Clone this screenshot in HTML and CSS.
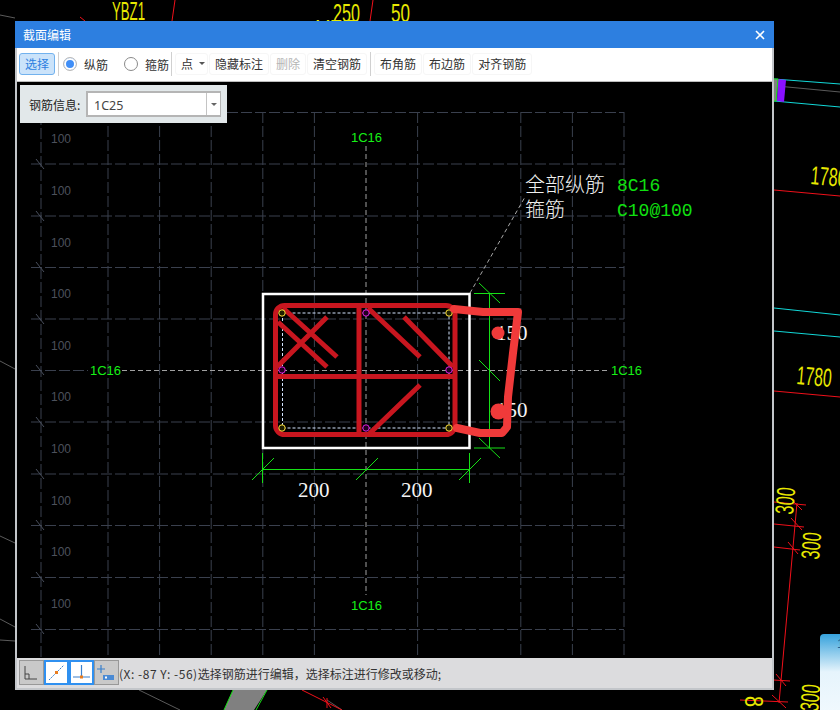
FILE: index.html
```html
<!DOCTYPE html>
<html lang="zh">
<head>
<meta charset="utf-8">
<title>截面编辑</title>
<link rel="stylesheet" href="styles.css">
</head>
<body>
<div class="desktop">
  <svg class="backdrop" width="840" height="710" viewBox="0 0 840 710">
    <path class="ln-gray" d="M0 15L15 18M0 361L15 369M0 536L15 543M0 619L15 627M0 640L15 641M139 690L180 710M327 700L342 710M777 86L840 92"/>
    <path class="ln-red" d="M175 0L172 21M373 0L370 21M80 17L85 21M302 690L342 710M774 190L840 196M774 391L840 397"/>
    <path class="ln-red" d="M797 503L779 703M774 502L806 505M774 524L804 527M774 547L800 550M774 680L790 681M740 700L788 702M790 498L802 510M791 518L802 530M788 542L798 554M776 674L786 686M772 695L786 708M323 697L331 708M327 698V708"/>
    <path class="ln-cyan" d="M774 79L840 84M774 101L840 107M774 308L840 315M774 331L840 337"/>
    <polygon class="fill-gray" points="774,79 778,79 777,101 774,101"/>
    <polygon class="fill-purple" points="778,79 786,80 784,102 777,101"/>
    <path class="ln-green" d="M774 79H778L776 101H774"/>
    <polygon class="fill-gray" points="233,690 267,690 254,710 224,710"/>
    <path class="ln-green" d="M233 690L224 710M267 690L256 710"/>
    <text class="cad-y" x="112" y="20" textLength="33" lengthAdjust="spacingAndGlyphs">YBZ1</text>
    <text class="cad-y" x="316" y="38" textLength="40" lengthAdjust="spacingAndGlyphs">YBZ</text>
    <text class="cad-y" x="333" y="22" textLength="27" lengthAdjust="spacingAndGlyphs">250</text>
    <text class="cad-y" x="391" y="22" textLength="19" lengthAdjust="spacingAndGlyphs">50</text>
    <text class="cad-y" transform="translate(810 184) rotate(5)" textLength="36" lengthAdjust="spacingAndGlyphs">1780</text>
    <text class="cad-y" transform="translate(796 384) rotate(5)" textLength="35" lengthAdjust="spacingAndGlyphs">1780</text>
    <text class="cad-y" transform="translate(793 515) rotate(-85)" textLength="27" lengthAdjust="spacingAndGlyphs">300</text>
    <text class="cad-y" transform="translate(819 560) rotate(-85)" textLength="27" lengthAdjust="spacingAndGlyphs">300</text>
    <text class="cad-y" transform="translate(818 712) rotate(-85)" textLength="27" lengthAdjust="spacingAndGlyphs">300</text>
    <text class="cad-y" transform="translate(745 696) rotate(90)" textLength="11" lengthAdjust="spacingAndGlyphs">8</text>
  </svg>

  <div class="toast">1</div>

  <section class="dialog">
    <header class="titlebar">
      <span class="title">截面编辑</span>
      <svg class="close" width="10" height="10" viewBox="0 0 10 10"><path d="M1 1L9 9M9 1L1 9"/></svg>
    </header>

    <nav class="toolbar">
      <button class="tool tool-active">选择</button>
      <i class="sep"></i>
      <span class="radio radio-on"></span><span class="radio-label">纵筋</span>
      <span class="radio radio-off"></span><span class="radio-label">箍筋</span>
      <i class="sep sep-tight"></i>
      <button class="tool tool-menu">点<b class="caret"></b></button>
      <button class="tool tool-next">隐藏标注</button>
      <button class="tool tool-next tool-disabled">删除</button>
      <button class="tool tool-next">清空钢筋</button>
      <i class="sep"></i>
      <button class="tool">布角筋</button>
      <button class="tool tool-next">布边筋</button>
      <button class="tool tool-next">对齐钢筋</button>
    </nav>

    <main class="canvas">
      <svg class="drawing" width="755" height="576" viewBox="17 82 755 576">
        <path class="grid" d="M41 100V658M108 112V658M159.6 112V658M211.2 112V658M262.8 112V658M314.4 112V658M417.6 112V658M520.8 112V658M572.4 112V658M624 112V658"/>
        <path class="grid" d="M31 112.5H624M31 164H624M31 216H624M31 267.5H624M31 319H624M31 370.5H88M31 422H624M31 474H624M31 525.5H624M31 577.5H624M31 629.5H624"/>
        <path class="grid-solid" d="M36 159L44 169M36 211L44 221M36 262L44 272M36 314L44 324M36 365L44 375M36 417L44 427M36 469L44 479M36 520L44 530M36 572L44 582M36 624L44 634"/>
        <g class="lbl-100">
          <text x="51" y="143">100</text><text x="51" y="195">100</text><text x="51" y="247">100</text>
          <text x="51" y="298">100</text><text x="51" y="350">100</text><text x="51" y="401">100</text>
          <text x="51" y="453">100</text><text x="51" y="505">100</text><text x="51" y="556">100</text>
          <text x="51" y="608">100</text>
        </g>
        <path class="center" d="M122 370.5H610M366 146V595"/>
        <path class="leader" d="M470 293L525 197"/>
        <g class="lbl-1c16">
          <text x="351" y="142">1C16</text><text x="90" y="375">1C16</text>
          <text x="611" y="375">1C16</text><text x="351" y="610">1C16</text>
        </g>
        <path class="dim" d="M262.5 453V483M469.5 453V483M262 469.5H470M252 480L274 458M356 480L378 458M459 480L481 458M489.5 293V448M474 293.5H505M474 448H505M479 283L500 303M479 360L500 381M479 438L500 458"/>
        <rect class="section" x="263" y="294" width="206.5" height="154"/>
        <rect class="stirrup" x="282.5" y="313" width="166.5" height="115"/>
        <path class="rebar-red" d="M283 308L337 357M278 322L327 367M327 317L277 367M368 308L420 357M404 317L453 367M420 385L368 435M359 305.5V434.5M275.5 376.5H455"/>
        <rect class="rebar-red" x="275.5" y="305.5" width="179.5" height="129" rx="9"/>
        <g class="bar-y">
          <circle cx="282" cy="313" r="3.2"/><circle cx="449" cy="313" r="3.2"/>
          <circle cx="282" cy="428" r="3.2"/><circle cx="449" cy="428" r="3.2"/>
        </g>
        <g class="bar-m">
          <circle cx="366" cy="313" r="3.2"/><circle cx="282" cy="370" r="3.2"/>
          <circle cx="449" cy="370" r="3.2"/><circle cx="366" cy="428" r="3.2"/>
        </g>
        <text class="lbl-dim" x="298" y="497">200</text>
        <text class="lbl-dim" x="401" y="497">200</text>
        <text class="lbl-dim" x="496" y="340">150</text>
        <text class="lbl-dim" x="496" y="417">150</text>
        <path class="scrawl" d="M454 309L483 312L518 312L513 353L508 397L507 427L502 433L480 433L457 428"/>
        <circle class="scrawl-dot" cx="498" cy="333" r="6.5"/>
        <circle class="scrawl-dot" cx="498.5" cy="411.5" r="8"/>
        <text class="lbl-note" x="525" y="192">全部纵筋</text>
        <text class="lbl-note" x="525" y="217">箍筋</text>
        <text class="lbl-green" x="617" y="191">8C16</text>
        <text class="lbl-green" x="617" y="216">C10@100</text>
      </svg>

      <div class="info-panel">
        <span class="info-label">钢筋信息:</span>
        <div class="combo">
          <span class="combo-value">1C25</span>
          <span class="combo-drop"><b class="caret"></b></span>
        </div>
      </div>
    </main>

    <footer class="statusbar">
      <span class="snap snap-off">
        <svg width="23" height="23" viewBox="1 1 23 23"><path class="ic-dark" d="M6 6V19H18M6 14H10V19"/></svg>
      </span>
      <span class="snap snap-on">
        <svg width="21" height="21" viewBox="2 2 21 21"><path class="ic-blue-dash" d="M5 20L20 5"/><rect class="ic-orange" x="11" y="11" width="3" height="3"/></svg>
      </span>
      <span class="snap snap-on">
        <svg width="21" height="21" viewBox="2 2 21 21"><path class="ic-blue" d="M12.5 5V17M4 17H21"/><rect class="ic-orange" x="11" y="15.5" width="3" height="3"/></svg>
      </span>
      <span class="snap snap-off">
        <svg width="23" height="23" viewBox="1 1 23 23"><path class="ic-blue" d="M3 9H11M7 5V13"/><rect class="ic-fill" x="9" y="15" width="11" height="5"/><rect class="ic-hole" x="11" y="16.5" width="2" height="2"/></svg>
      </span>
      <span class="status-text"><span class="status-coord">(X: -87 Y: -56)</span>选择钢筋进行编辑，选择标注进行修改或移动;</span>
    </footer>
  </section>
</div>
</body>
</html>
```
FILE: styles.css
```css
* { box-sizing: border-box; }
html, body { margin: 0; padding: 0; background: #000; }
body { font-family: "Noto Sans CJK SC", "Liberation Sans", sans-serif; font-size: 12px; color: #333; }

.desktop { position: relative; width: 840px; height: 710px; overflow: hidden; background: #000; }
.backdrop { position: absolute; left: 0; top: 0; }
.backdrop path { fill: none; }
.ln-gray { stroke: #5a5a5a; stroke-width: 1; }
.ln-red { stroke: #f0101a; stroke-width: 1; }
.ln-cyan { stroke: #12d8d8; stroke-width: 1; }
.ln-green { stroke: #16e016; stroke-width: 1; }
.fill-gray { fill: #808080; }
.fill-purple { fill: #8a10ff; }
.cad-y { font-family: "Liberation Sans", sans-serif; font-size: 26px; fill: #e8e800; }

.toast {
  position: absolute; left: 820px; top: 634px; width: 40px; height: 90px;
  border-radius: 4px 0 0 0; padding: 2px 0 0 17px;
  background: linear-gradient(#36a2dc, #e6f4fc 42%, #f3fafe);
  color: #1c5f92; font-size: 13px; font-family: "Liberation Sans", sans-serif;
}

.dialog {
  position: absolute; left: 15px; top: 21px; width: 759px; height: 669px;
  display: flex; flex-direction: column;
  background: #c3c6ca;
  padding: 0 2px 2px;
}
.titlebar {
  margin: 0 -2px; height: 27px; flex: none;
  display: flex; align-items: center; justify-content: space-between;
  padding: 0 9px 0 8px;
  background: #2d7fe0; color: #fff;
}
.title { font-size: 12px; }
.close path { stroke: #fff; stroke-width: 1.6; fill: none; }

.toolbar {
  height: 34px; flex: none; display: flex; align-items: center;
  padding: 0 0 1px 2px; background: #fff; border-bottom: 1px solid #bdbdbd;
}
.tool {
  height: 22px; padding: 0 5px; border: 1px solid #f6f6f6; border-radius: 3px;
  background: #fff; color: #333; font: inherit; line-height: 18px; white-space: nowrap;
}
.tool-active { background: #cbe3fa; border-color: #72b2ee; color: #2d7fe0; }
.tool-disabled { color: #b5b5b5; }
.tool-menu { width: 33px; margin-left: 3px; text-align: left; position: relative; }
.tool-next { margin-left: 1px; }
.tool-menu .caret { position: absolute; left: 23px; top: 8px; }
.caret {
  display: block; width: 0; height: 0;
  border-left: 3px solid transparent; border-right: 3px solid transparent; border-top: 3px solid #555;
}
.sep { width: 1px; height: 24px; margin: 0 3px; background: #d0d0d0; flex: none; }
.sep-tight { margin: 0 0 0 2px; }
.radio { width: 14px; height: 14px; border-radius: 50%; flex: none; margin-bottom: 1px; background: #fff; }
.radio-on { margin-left: 1px; border: 1px solid #b8b8b8; box-shadow: inset 0 0 0 2px #fff, inset 0 0 0 7px #3f8ef7; }
.radio-off { margin-left: 16px; border: 1px solid #8a8a8a; }
.radio-label { margin-left: 7px; }

.canvas { position: relative; flex: 1; min-height: 0; background: #000; overflow: hidden; }
.drawing { position: absolute; left: 0; top: 0; display: block; }
.drawing path, .drawing rect, .drawing circle { fill: none; }
.grid { stroke: #3a404e; stroke-width: 1; stroke-dasharray: 11 3; }
.grid-solid { stroke: #4a505e; stroke-width: 1; }
.center { stroke: #a0a0a0; stroke-width: 1; stroke-dasharray: 5 3; }
.leader { stroke: #a8a8a8; stroke-width: 1; stroke-dasharray: 4 3; }
.dim { stroke: #16e016; stroke-width: 1; }
.drawing .section { stroke: #fff; stroke-width: 2.5; }
.drawing .stirrup { stroke: #d4e4ff; stroke-width: 1; stroke-dasharray: 3 2; }
.drawing .rebar-red { stroke: #c8161f; stroke-width: 5; }
.drawing .bar-y circle { stroke: #ffe23a; stroke-width: 1; fill: #202000; }
.drawing .bar-m circle { stroke: #e020e0; stroke-width: 1; fill: #200020; }
.drawing .scrawl { stroke: #f03a3a; stroke-width: 8; stroke-linejoin: round; stroke-linecap: round; }
.drawing .scrawl-dot { fill: #f03a3a; }
.lbl-100 text { font-family: "Liberation Sans", sans-serif; font-size: 12px; fill: #4c515c; }
.lbl-1c16 text { font-family: "Liberation Sans", sans-serif; font-size: 13px; fill: #16f016; }
.lbl-dim { font-family: "Liberation Serif", serif; font-size: 21px; fill: #f4f4f4; }
.lbl-note { font-family: "Noto Sans CJK SC", sans-serif; font-size: 20px; font-weight: 300; fill: #f0f0f0; }
.lbl-green { font-family: "Liberation Mono", monospace; font-size: 18px; fill: #10e010; }

.info-panel {
  position: absolute; left: 3px; top: 3px; width: 207px; height: 38px;
  display: flex; align-items: center; padding: 0 6px 0 9px;
  background: #e2e8ea; color: #222;
}
.info-label { width: 57px; flex: none; }
.combo {
  flex: 1; height: 26px; display: flex; align-items: stretch;
  background: #fff; border: 1px solid #b5b5b5; border-width: 2px 1px 2px 2px;
}
.combo-value { flex: 1; padding-left: 6px; line-height: 25px; font-family: "Noto Sans", "Liberation Sans", sans-serif; font-size: 12.5px; color: #444; }
.combo-drop { width: 14px; display: flex; align-items: center; justify-content: center; border-left: 1px solid #c4c4c4; }
.combo-drop .caret { border-top-color: #666; }

.statusbar {
  height: 30px; flex: none; display: flex; align-items: center; padding: 0 0 1px 2px;
  background: #dcdcde;
}
.snap { width: 25px; height: 25px; flex: none; display: flex; align-items: center; justify-content: center; }
.snap-off { background: #c9c9c9; border: 1px solid #989898; }
.snap-on { background: #fff; border: 2px solid #2f90f0; }
.snap svg { display: block; }
.snap path { fill: none; }
.ic-dark { stroke: #444; stroke-width: 1; }
.ic-blue { stroke: #3a80cc; stroke-width: 1.2; }
.ic-blue-dash { stroke: #3a80cc; stroke-width: 1; stroke-dasharray: 2 1; }
.ic-orange { fill: #e87d20; }
.ic-fill { fill: #4a8ad4; }
.ic-hole { fill: #fff; }
.status-text { color: #333; white-space: nowrap; padding-top: 1px; }
.status-coord { letter-spacing: .53px; }
```
